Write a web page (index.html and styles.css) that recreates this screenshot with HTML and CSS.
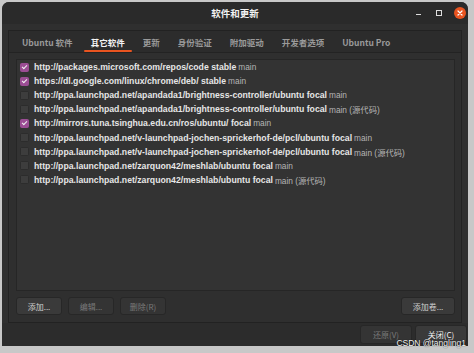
FILE: index.html
```html
<!DOCTYPE html>
<html>
<head>
<meta charset="utf-8">
<link rel="stylesheet" href="styles.css">
</head>
<body>
<div class="window">
  <div class="titlebar">
    <div class="title">软件和更新</div>
    <div class="controls">
      <span class="ctl min"></span>
      <span class="ctl max"></span>
      <span class="ctl close">
        <svg width="12" height="12" viewBox="0 0 12 12"><circle cx="6" cy="6" r="6" fill="#e95420"/><path d="M4 4 L8 8 M8 4 L4 8" stroke="#fff" stroke-width="1.2" stroke-linecap="round"/></svg>
      </span>
    </div>
  </div>
  <div class="notebook">
    <div class="tabs">
      <span class="tab">Ubuntu 软件</span>
      <span class="tab active">其它软件</span>
      <span class="tab">更新</span>
      <span class="tab">身份验证</span>
      <span class="tab">附加驱动</span>
      <span class="tab">开发者选项</span>
      <span class="tab">Ubuntu Pro</span>
    </div>
    <div class="page">
      <div class="list">
        <div class="row"><span class="cb on"></span><span class="url">http://packages.microsoft.com/repos/code stable</span> <span class="comp">main</span></div>
        <div class="row"><span class="cb on"></span><span class="url">https://dl.google.com/linux/chrome/deb/ stable</span> <span class="comp">main</span></div>
        <div class="row"><span class="cb"></span><span class="url">http://ppa.launchpad.net/apandada1/brightness-controller/ubuntu focal</span> <span class="comp">main</span></div>
        <div class="row"><span class="cb"></span><span class="url">http://ppa.launchpad.net/apandada1/brightness-controller/ubuntu focal</span> <span class="comp">main (源代码)</span></div>
        <div class="row"><span class="cb on"></span><span class="url">http://mirrors.tuna.tsinghua.edu.cn/ros/ubuntu/ focal</span> <span class="comp">main</span></div>
        <div class="row"><span class="cb"></span><span class="url">http://ppa.launchpad.net/v-launchpad-jochen-sprickerhof-de/pcl/ubuntu focal</span> <span class="comp">main</span></div>
        <div class="row"><span class="cb"></span><span class="url">http://ppa.launchpad.net/v-launchpad-jochen-sprickerhof-de/pcl/ubuntu focal</span> <span class="comp">main (源代码)</span></div>
        <div class="row"><span class="cb"></span><span class="url">http://ppa.launchpad.net/zarquon42/meshlab/ubuntu focal</span> <span class="comp">main</span></div>
        <div class="row"><span class="cb"></span><span class="url">http://ppa.launchpad.net/zarquon42/meshlab/ubuntu focal</span> <span class="comp">main (源代码)</span></div>
      </div>
      <div class="actions">
        <span class="btn">添加...</span>
        <span class="btn dis">编辑...</span>
        <span class="btn dis">删除(R)</span>
        <span class="spacer"></span>
        <span class="btn">添加卷...</span>
      </div>
    </div>
  </div>
  <div class="footer">
    <span class="btn dis">还原(V)</span>
    <span class="btn strong">关闭(C)</span>
  </div>
</div>
<div class="watermark">CSDN @tangling1</div>
</body>
</html>
```

FILE: styles.css
```css
html, body {
  margin: 0;
  padding: 0;
}
body {
  width: 474px;
  height: 353px;
  background: #c8c8c8;
  overflow: hidden;
  position: relative;
  font-family: "Liberation Sans", "Noto Sans CJK SC", sans-serif;
  padding-top: 2px;
  padding-left: 2px;
  box-sizing: border-box;
}
.window {
  width: 466px;
  height: 344px;
  background: #2f2f2f;
  border-radius: 7px 7px 0 0;
  display: flex;
  flex-direction: column;
  overflow: hidden;
}
.titlebar {
  height: 22px;
  background: #2a2a2a;
  position: relative;
  display: flex;
  align-items: center;
  justify-content: center;
  flex: none;
}
.title {
  color: #f2f2f2;
  font-weight: bold;
  font-size: 9.5px;
  font-family: "Noto Sans CJK SC", sans-serif;
}
.controls {
  position: absolute;
  right: 2px;
  top: 5px;
  display: flex;
  align-items: center;
  gap: 9px;
}
.ctl {
  width: 12px;
  height: 12px;
  display: flex;
  align-items: center;
  justify-content: center;
}
.ctl svg { display: block; }
.min::before {
  content: "";
  width: 5px;
  height: 1px;
  background: #ddd;
  margin-top: 3px;
}
.max::before {
  content: "";
  width: 4px;
  height: 4px;
  border: 1px solid #ddd;
}
.notebook {
  margin: 6px 6px 0 6px;
  border: 1px solid #222;
  height: 293px;
  display: flex;
  flex-direction: column;
  background: #2f2f2f;
  flex: none;
  box-sizing: border-box;
}
.tabs {
  height: 21px;
  display: flex;
  align-items: stretch;
  padding-left: 4px;
  border-bottom: 1px solid #232323;
  background: #2c2c2c;
}
.tab {
  display: flex;
  align-items: center;
  padding: 0 9px;
  font-size: 8.5px;
  color: #9a9a9a;
  font-weight: bold;
  font-family: "Noto Sans CJK SC", sans-serif;
  position: relative;
}
.tab.active {
  color: #f4f4f4;
}
.tab.active::after {
  content: "";
  position: absolute;
  left: 2px;
  right: 2px;
  bottom: 0;
  height: 2px;
  border-radius: 1px;
  background: #e95420;
}
.page {
  flex: 1;
  display: flex;
  flex-direction: column;
  padding: 6px 6px 7px 7px;
}
.list {
  flex: 1;
  border: 1px solid #262626;
  background: #333333;
  padding-top: 0;
}
.row {
  height: 14.1px;
  display: flex;
  align-items: center;
  padding-left: 3px;
  white-space: nowrap;
  font-size: 8.7px;
}
.cb {
  width: 7px;
  height: 7px;
  border-radius: 1.5px;
  background: #3d3d3d;
  border: 1px solid #2c2c2c;
  margin-right: 5px;
  flex: none;
  position: relative;
}
.cb.on {
  background: #9b4d94;
  border-color: #9b4d94;
}
.cb.on::after {
  content: "";
  position: absolute;
  left: 1px;
  top: 1px;
  width: 4px;
  height: 2px;
  border-left: 1.2px solid #f2f2f2;
  border-bottom: 1.2px solid #f2f2f2;
  transform: rotate(-45deg);
  transform-origin: center;
}
.url {
  color: #e6e6e6;
  font-weight: bold;
}
.comp {
  color: #b5b5b5;
  margin-left: 2px;
  font-size: 8.3px;
}
.actions {
  display: flex;
  gap: 6px;
  margin-top: 6px;
  height: 18px;
}
.spacer { flex: 1; }
.btn {
  display: flex;
  align-items: center;
  justify-content: center;
  padding: 0 8px;
  min-width: 30px;
  background: #3a3a3a;
  border: 1px solid #272727;
  border-radius: 3px;
  color: #d0d0d0;
  font-size: 8px;
  font-family: "Noto Sans CJK SC", sans-serif;
}
.btn.dis {
  color: #7a7a7a;
  background: #343434;
}
.btn.strong {
  color: #f0f0f0;
}
.actions .btn { width: 46px; padding: 0; box-sizing: border-box; }
.actions .btn:last-child { width: 54px; }
.footer {
  flex: 1;
  display: flex;
  justify-content: flex-end;
  align-items: center;
  gap: 3px;
  padding: 0 1px 0 0;
  background: #2c2c2c;
}
.footer .btn {
  width: 52px;
  height: 19px;
  padding: 0;
  box-sizing: border-box;
}
.watermark {
  position: absolute;
  right: 8px;
  bottom: 5px;
  color: #f4f4f4;
  font-size: 8.5px;
  font-family: "Liberation Sans", sans-serif;
  text-shadow: 0 0 1px #000;
}
```
